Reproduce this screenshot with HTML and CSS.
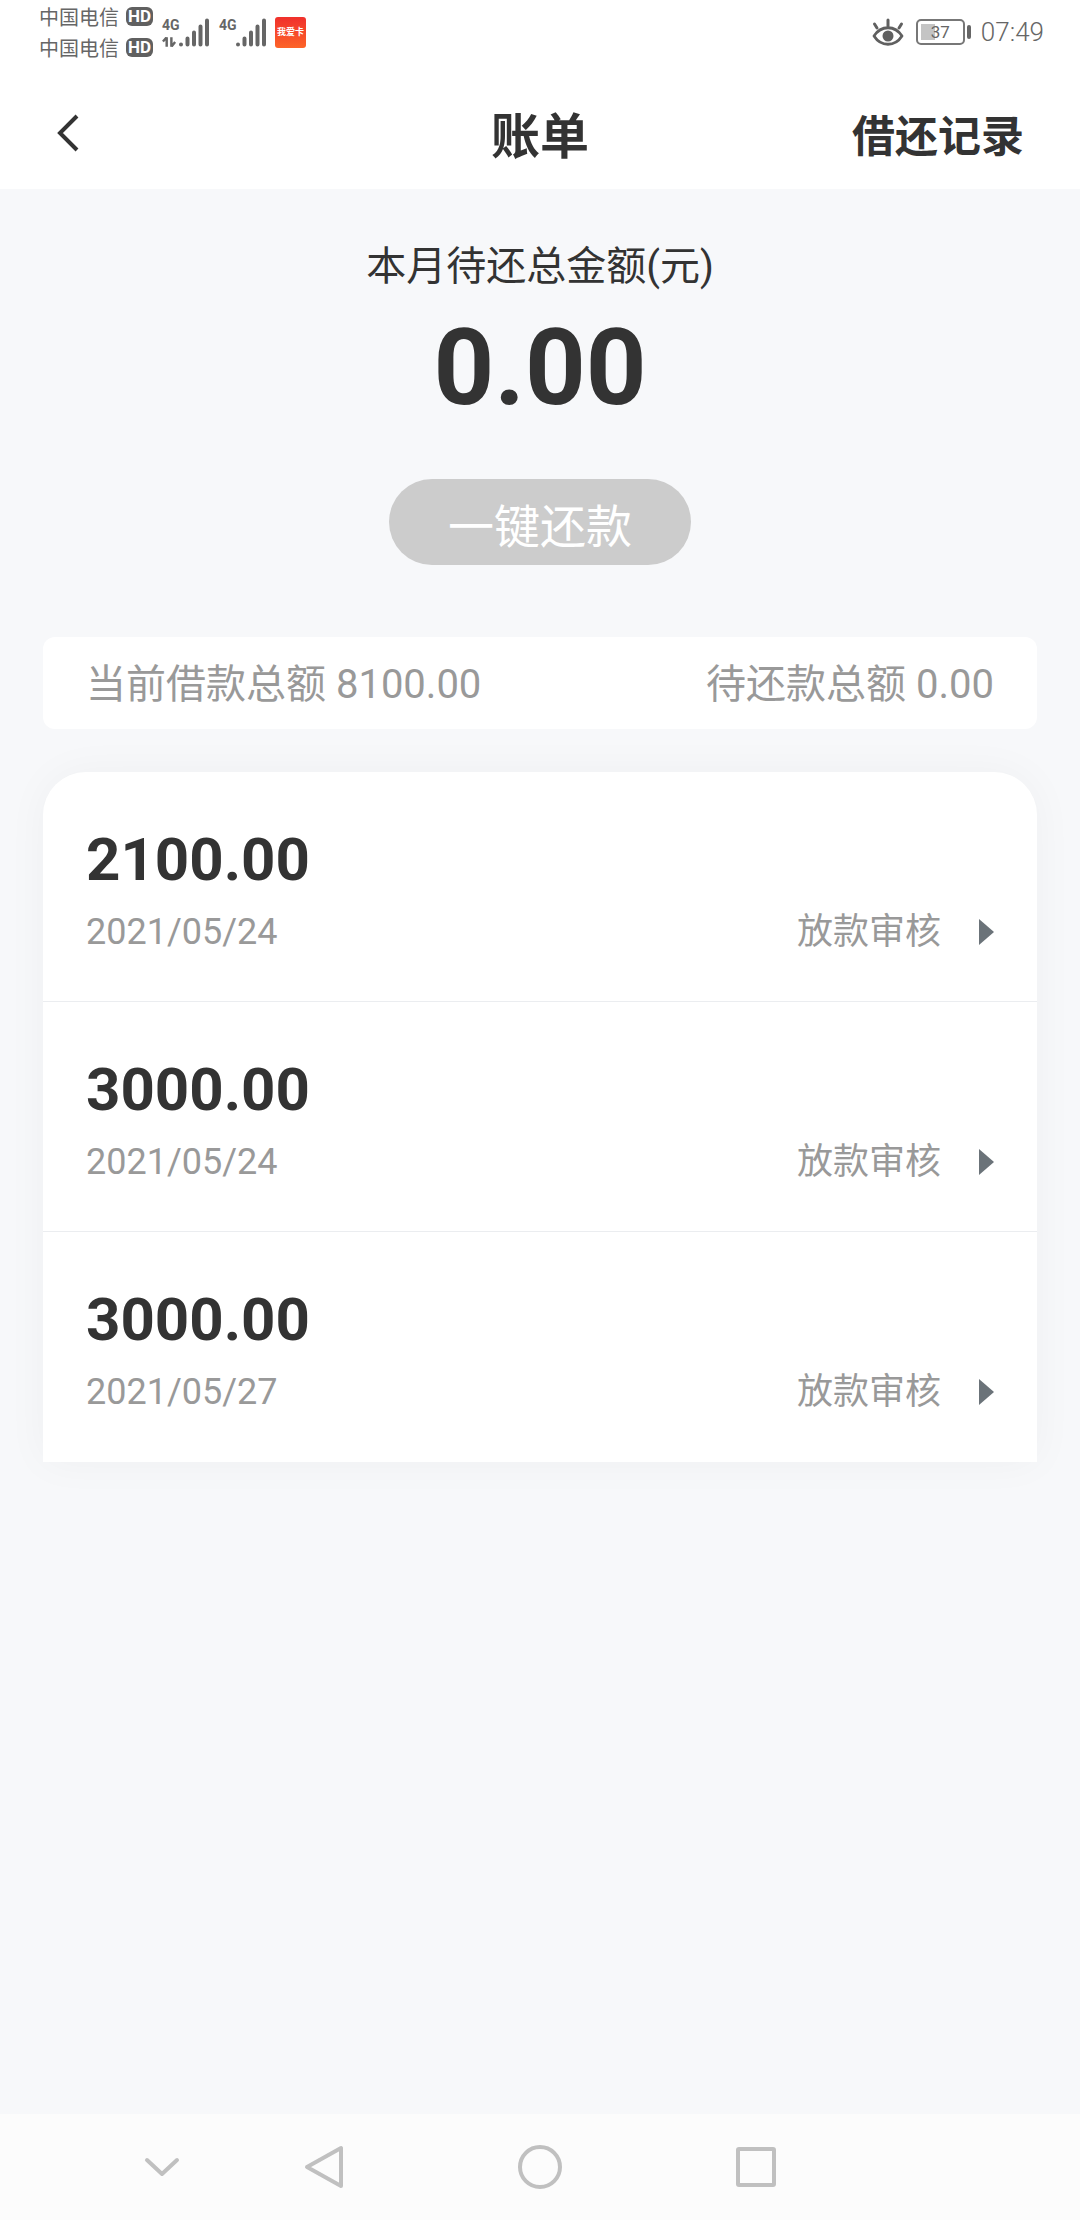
FILE: index.html
```html
<!DOCTYPE html>
<html lang="zh-CN">
<head>
    <meta charset="UTF-8">
    <meta name="viewport" content="width=device-width, initial-scale=1.0">
    <title>账单</title>
    <link rel="stylesheet" href="styles.css">
</head>
<body>
    <!-- Status bar -->
    <div class="status-bar">
        <div class="carriers">
            <div class="carrier">中国电信 <span class="hd">HD</span></div>
            <div class="carrier">中国电信 <span class="hd">HD</span></div>
        </div>
        <div class="signal">
            <div class="network">
                <span class="network-type">4G</span>
                <svg class="data-arrows" viewBox="0 0 16 10" aria-hidden="true">
                    <path d="M5 0v10M5 0L1 4.500M10 0v10M10 10l4-5" fill="none" stroke="#666" stroke-width="2.600"/>
                </svg>
            </div>
            <svg class="bars" viewBox="0 0 32 30" aria-hidden="true">
                <path d="M3 27.500v0M9.500 27.500v-6M16 27.500v-12M22.500 27.500v-18M29 27.500v-24"/>
            </svg>
        </div>
        <div class="signal">
            <div class="network">
                <span class="network-type">4G</span>
            </div>
            <svg class="bars" viewBox="0 0 32 30" aria-hidden="true">
                <path d="M3 27.500v0M9.500 27.500v-6M16 27.500v-12M22.500 27.500v-18M29 27.500v-24"/>
            </svg>
        </div>
        <div class="app-badge">我爱卡</div>

        <div class="status-right">
            <svg class="eye" viewBox="0 0 32 30" aria-hidden="true">
                <path d="M2 19C9 8 23 8 30 19C23 30 9 30 2 19Z" fill="none" stroke="#606060" stroke-width="2.800" stroke-linejoin="round"/>
                <path d="M16 9V3M5 11L2.500 7M27 11L29.500 7" fill="none" stroke="#606060" stroke-width="3" stroke-linecap="round"/>
                <circle cx="16" cy="19" r="5.500" fill="#606060"/>
            </svg>
            <div class="battery"><span class="battery-level">37</span></div>
            <span class="clock">07:49</span>
        </div>
    </div>

    <!-- Page header -->
    <header class="header">
        <button class="back" type="button" aria-label="返回">
            <svg viewBox="0 0 24 40" aria-hidden="true">
                <path d="M21 3L4 20L21 37" fill="none" stroke="#333" stroke-width="4"/>
            </svg>
        </button>
        <h1 class="title">账单</h1>
        <a class="records" href="#">借还记录</a>
    </header>

    <main class="main">
        <!-- Amount due this month -->
        <section class="due">
            <p class="due-label">本月待还总金额(元)</p>
            <p class="due-amount">0.00</p>
            <button class="repay" type="button">一键还款</button>
        </section>

        <div class="summary">
            <span>当前借款总额 8100.00</span>
            <span>待还款总额 0.00</span>
        </div>

        <!-- Loan list -->
        <ul class="loans">
            <li>
                <a class="loan" href="#">
                    <span class="loan-amount">2100.00</span>
                    <span class="loan-info">
                        <span>2021/05/24</span>
                        <span class="loan-status">放款审核</span>
                    </span>
                </a>
            </li>
            <li>
                <a class="loan" href="#">
                    <span class="loan-amount">3000.00</span>
                    <span class="loan-info">
                        <span>2021/05/24</span>
                        <span class="loan-status">放款审核</span>
                    </span>
                </a>
            </li>
            <li>
                <a class="loan" href="#">
                    <span class="loan-amount">3000.00</span>
                    <span class="loan-info">
                        <span>2021/05/27</span>
                        <span class="loan-status">放款审核</span>
                    </span>
                </a>
            </li>
        </ul>
    </main>

    <!-- System navigation -->
    <nav class="nav-bar">
        <button class="nav-hide" type="button" aria-label="收起">
            <svg viewBox="0 0 48 48"><path d="M9 17L24 31L39 17"/></svg>
        </button>
        <button type="button" aria-label="后退">
            <svg viewBox="0 0 48 48"><path d="M41 5V43L7 24Z"/></svg>
        </button>
        <button type="button" aria-label="主屏幕">
            <svg viewBox="0 0 48 48"><circle cx="24" cy="24" r="20"/></svg>
        </button>
        <button type="button" aria-label="最近任务">
            <svg viewBox="0 0 48 48"><rect x="6" y="6" width="36" height="36" rx="1"/></svg>
        </button>
    </nav>
</body>
</html>
```

FILE: styles.css
```css
/* General Styling */
* {
    box-sizing: border-box;
    margin: 0;
    padding: 0;
}

body {
    display: flex;
    flex-direction: column;
    min-height: 100vh;
    font-family: Roboto, "Noto Sans CJK SC", sans-serif;
    color: #333;
    background: #f7f8fa;
}

button {
    border: none;
    background: none;
    font: inherit;
    cursor: pointer;
}

a {
    color: inherit;
    text-decoration: none;
}

svg {
    display: block;
}

/* Status Bar */
.status-bar {
    display: flex;
    align-items: center;
    height: 64px;
    padding: 0 36px 0 39px;
    background: #fff;
    color: #666;
}

.carrier {
    display: flex;
    align-items: center;
    gap: 7px;
    height: 31px;
    font-size: 20px;
}

.hd {
    width: 27px;
    border-radius: 6px;
    background: #606060;
    color: #fff;
    font-size: 17px;
    font-weight: 700;
    line-height: 19px;
    text-align: center;
}

.signal {
    display: flex;
    align-items: flex-start;
    height: 30px;
    margin-left: 9px;
}

.network {
    width: 16px;
}

.network-type {
    display: block;
    font-size: 14px;
    font-weight: 700;
    line-height: 16px;
}

.data-arrows {
    width: 15px;
    height: 10px;
    margin-top: 4px;
}

.bars {
    width: 32px;
    height: 30px;
    fill: none;
    stroke: #666;
    stroke-width: 4;
    stroke-linecap: round;
}

.app-badge {
    width: 31px;
    margin-left: 8px;
    border-radius: 3px;
    background: linear-gradient(#f0302c, #fd6428);
    color: #fff;
    font-size: 9px;
    font-weight: 700;
    line-height: 31px;
    text-align: center;
}

.status-right {
    display: flex;
    align-items: center;
    gap: 12px;
    margin-left: auto;
}

.eye {
    width: 32px;
    height: 30px;
}

.battery {
    position: relative;
    width: 49px;
    height: 26px;
    margin-right: 4px;
    padding: 3px;
    border: 2px solid #777;
    border-radius: 5px;
}

/* Battery terminal */
.battery::after {
    content: '';
    position: absolute;
    top: 4px;
    right: -8px;
    width: 4px;
    height: 14px;
    border-radius: 2px;
    background: #666;
}

.battery-level {
    display: block;
    background: linear-gradient(to right, #c4c4c4 37%, transparent 37%);
    font-size: 17px;
    line-height: 16px;
    text-align: center;
}

.clock {
    font-family: "Liberation Sans Narrow", Roboto, sans-serif;
    font-size: 26px;
    font-weight: 300;
}

/* Page Header */
.header {
    display: grid;
    grid-template-columns: 1fr auto 1fr;
    align-items: center;
    height: 125px;
    padding: 12px 56px 0;
    background: #fff;
}

.back {
    justify-self: start;
}

.back svg {
    width: 24px;
    height: 40px;
}

.title {
    font-size: 49px;
    font-weight: 700;
}

.records {
    justify-self: end;
    font-size: 43px;
    font-weight: 700;
}

/* Amount Due */
.main {
    flex: 1;
    padding: 0 43px;
}

.due {
    padding: 48px 0 72px;
    text-align: center;
}

.due-label {
    font-size: 40px;
    line-height: 60px;
}

.due-amount {
    margin-top: 11px;
    font-size: 106px;
    font-weight: 700;
    line-height: 120px;
}

.repay {
    width: 302px;
    height: 86px;
    margin-top: 51px;
    padding-top: 10px;
    border-radius: 43px;
    background: #ccc;
    color: #fff;
    font-size: 46px;
    line-height: 60px;
}

.summary {
    display: flex;
    justify-content: space-between;
    padding: 18px 43px 14px;
    border-radius: 12px;
    background: #fff;
    color: #999;
    font-size: 40px;
    line-height: 60px;
}

/* Loan List */
.loans {
    margin-top: 43px;
    border-radius: 43px 43px 0 0;
    background: #fff;
    box-shadow: 0 0 43px rgba(0, 0, 0, 0.04);
    list-style: none;
}

.loan {
    display: block;
    padding: 52px 43px 33px;
    border-bottom: 1px solid #ebedf0;
}

li:last-child .loan {
    border-bottom-color: transparent;
}

.loan-amount {
    display: block;
    font-size: 60px;
    font-weight: 700;
    line-height: 72px;
}

.loan-info {
    display: flex;
    justify-content: space-between;
    color: #999;
    font-size: 36px;
    line-height: 72px;
}

.loan-status {
    display: flex;
    align-items: center;
    gap: 38px;
}

/* Row arrow */
.loan-status::after {
    content: '';
    border-left: 15px solid #6b7379;
    border-top: 13px solid transparent;
    border-bottom: 13px solid transparent;
}

/* System Navigation */
.nav-bar {
    display: grid;
    grid-template-columns: 22.5% 15% 25% 15%;
    height: 106px;
    background: #fcfcfc;
}

.nav-bar button {
    display: flex;
    justify-content: center;
    align-items: center;
}

.nav-bar .nav-hide {
    padding-left: 33%;
}

.nav-bar svg {
    width: 48px;
    height: 48px;
    fill: none;
    stroke: #c0c0c0;
    stroke-width: 4;
    stroke-linecap: round;
    stroke-linejoin: round;
}
```
